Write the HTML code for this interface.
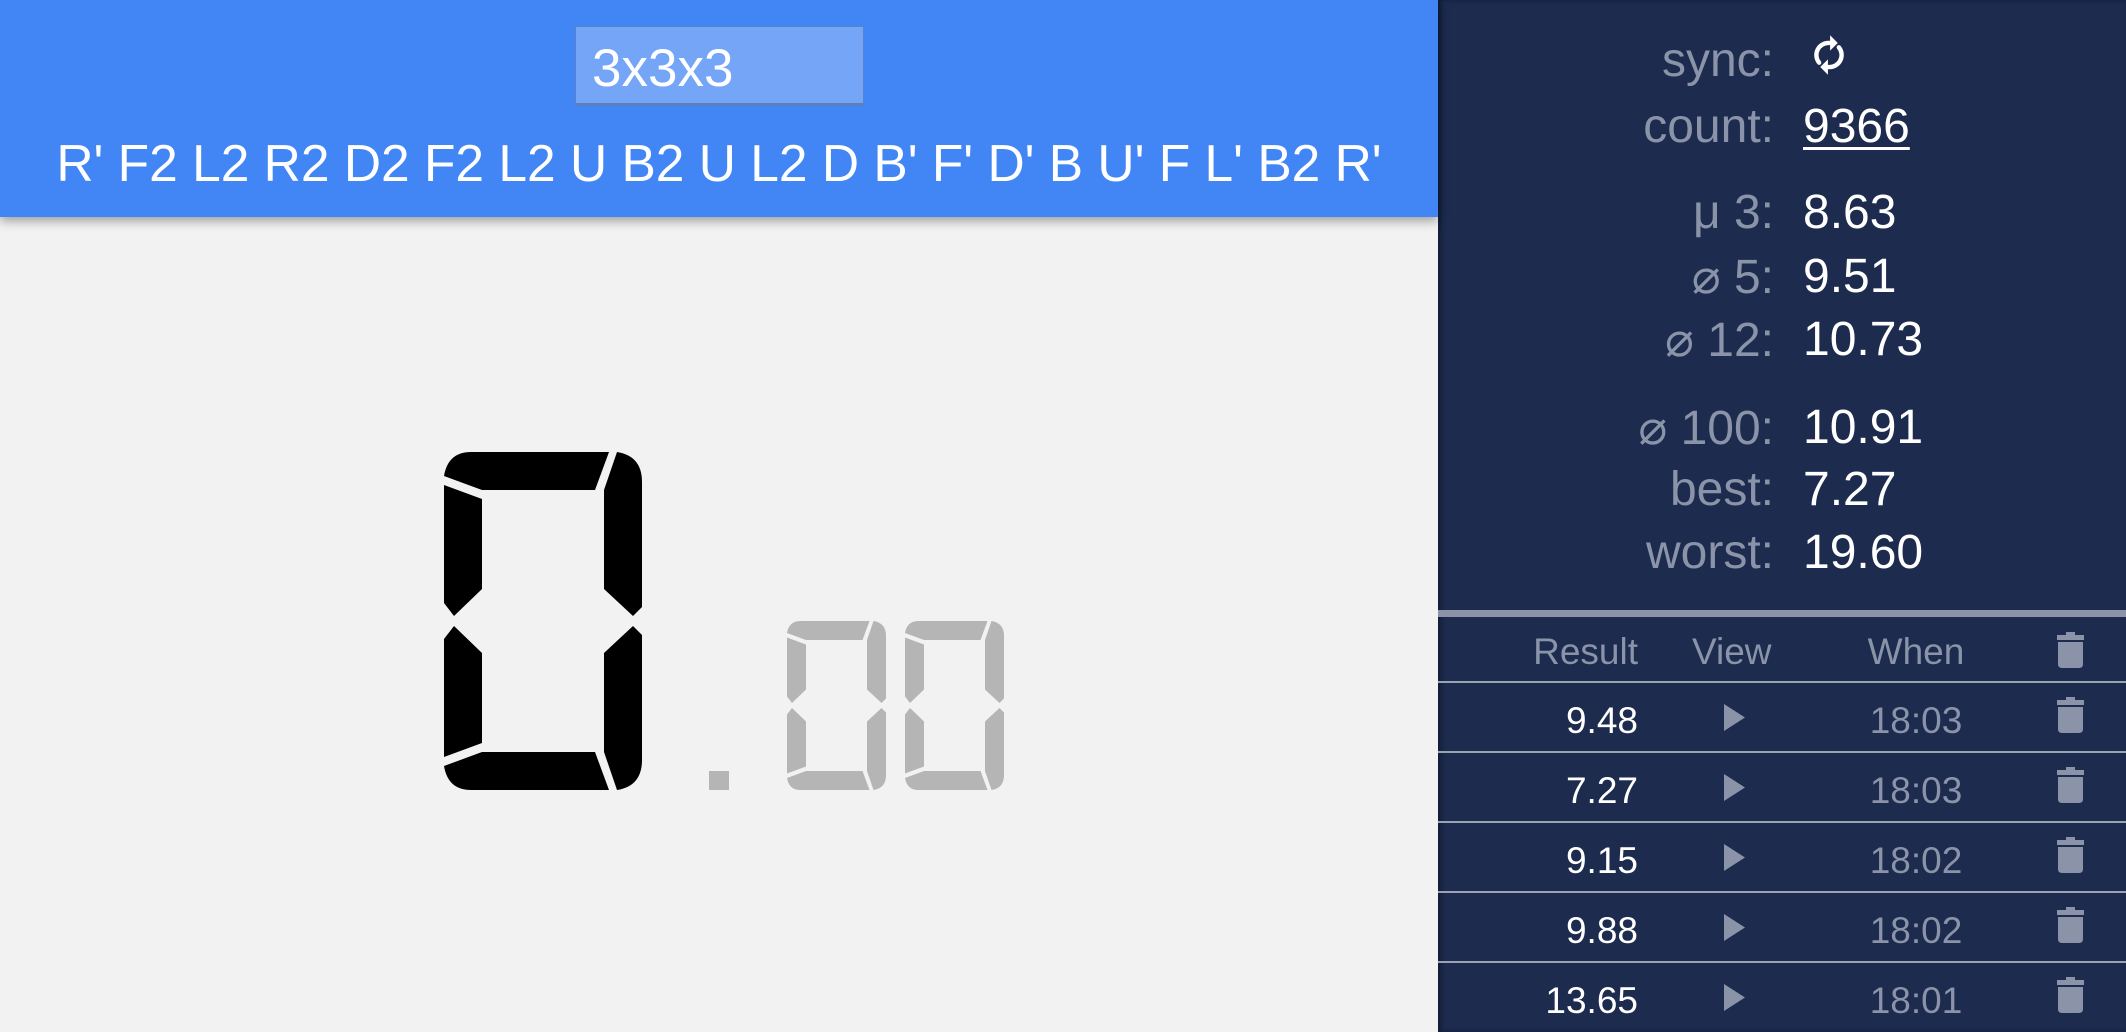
<!DOCTYPE html>
<html><head><meta charset="utf-8">
<style>
*{margin:0;padding:0;box-sizing:border-box}
html,body{width:2126px;height:1032px;overflow:hidden;background:#f2f2f2;font-family:"Liberation Sans",Arial,sans-serif}
#hdr{position:absolute;left:0;top:0;width:1438px;height:217px;background:#4285f4;box-shadow:0 4px 10px rgba(0,0,0,.35);z-index:2}
#inp{position:absolute;left:575px;top:26px;width:289px;height:80px;background:#75a5f7;border:1px solid #5b83c9;border-bottom:3px solid #5b7fbf;color:#fff;font-size:53px;line-height:84px;padding-left:16px}
#scr{position:absolute;left:0;top:128px;width:1438px;text-align:center;color:#fff;font-size:51.5px;line-height:70px;white-space:nowrap}
#panel{position:absolute;left:1438px;top:0;width:688px;height:1032px;background:#1c2b4e;box-shadow:inset 3px 0 4px rgba(0,0,0,.35)}
.lab{position:absolute;right:352px;color:#8a93a8;font-size:48px;white-space:nowrap;text-align:right}
.val{position:absolute;left:365px;color:#fff;font-size:48px;white-space:nowrap}
.sep{position:absolute;left:0;width:688px;top:610px;height:7px;background:#8a93a8}
.line{position:absolute;left:0;width:688px;height:2px;background:#9aa2b4}
.cell{position:absolute;font-size:37px;white-space:nowrap}
.r{color:#fff;text-align:right;width:200px;left:0}
.h{color:#8a93a8}
.w{color:#8a93a8;left:428px;width:100px;text-align:center}
</style></head><body>
<div id="hdr">
 <div id="inp">3x3x3</div>
 <div id="scr">R' F2 L2 R2 D2 F2 L2 U B2 U L2 D B' F' D' B U' F L' B2 R'</div>
</div>

<svg style="position:absolute;left:0;top:0" width="1438" height="1032">
 <defs>
  <g id="half">
   <path d="M27,0 L165,0 L151,38 L38,38 L0,24 Q4,0 27,0 Z"/>
   <path d="M173,0 Q198,4 198,30 L198,155 L189,164 L160,137 L160,38 Z"/>
   <path d="M0,33 L38,47 L38,137 L10,164 L0,151 Z"/>
  </g>
  <g id="zero">
   <use href="#half"/>
   <use href="#half" transform="translate(0,338) scale(1,-1)"/>
  </g>
 </defs>
 <g fill="#000" transform="translate(444,452)"><use href="#zero"/></g>
 <rect x="709" y="771" width="20" height="19" fill="#b5b5b5"/>
 <g fill="#b5b5b5" transform="translate(787,621) scale(0.5)"><use href="#zero"/></g>
 <g fill="#b5b5b5" transform="translate(905,621) scale(0.5)"><use href="#zero"/></g>
</svg>

<div id="panel">
 <div class="lab" style="top:33px">sync:</div>
 <svg style="position:absolute;left:372px;top:32px" width="38" height="46" viewBox="0 0 34 42">
  <g fill="none" stroke="#fff" stroke-width="4" stroke-linecap="round">
   <path d="M8,28 A11,11 0 0 1 17,10 L20,10"/>
   <path d="M26,14 A11,11 0 0 1 17,32 L14,32"/>
  </g>
  <path d="M18,3 L25,10 L18,17 Z" fill="#fff"/>
  <path d="M16,25 L9,32 L16,39 Z" fill="#fff"/>
 </svg>
 <div class="lab" style="top:99px">count:</div>
 <div class="val" style="top:99px;text-decoration:underline;text-underline-offset:5px;text-decoration-thickness:3px">9366</div>
 <div class="lab" style="top:185px">μ 3:</div><div class="val" style="top:185px">8.63</div>
 <div class="lab" style="top:249px">⌀ 5:</div><div class="val" style="top:249px">9.51</div>
 <div class="lab" style="top:312px">⌀ 12:</div><div class="val" style="top:312px">10.73</div>
 <div class="lab" style="top:400px">⌀ 100:</div><div class="val" style="top:400px">10.91</div>
 <div class="lab" style="top:462px">best:</div><div class="val" style="top:462px">7.27</div>
 <div class="lab" style="top:525px">worst:</div><div class="val" style="top:525px">19.60</div>

 <div class="sep"></div>
 <div class="cell h" style="top:631px;right:488px;text-align:right">Result</div>
 <div class="cell h" style="top:631px;left:254px">View</div>
 <div class="cell h" style="top:631px;left:428px;width:100px;text-align:center">When</div>
 <svg style="position:absolute;left:619px;top:632px" width="27" height="36" viewBox="0 0 27 36"><path d="M9,0 H18 V3 H27 V8 H0 V3 H9 Z M1,10 H26 V32 Q26,36 22,36 H5 Q1,36 1,32 Z" fill="#8a93a8"/></svg>
 <div class="line" style="top:681px"></div>
</div>
<div style="position:absolute;left:1438px;top:0">
 <div class="cell r" style="top:700px">9.48</div><svg style="position:absolute;left:286px;top:704px" width="21" height="27"><path d="M0,0 L21,13.5 L0,27Z" fill="#8a93a8"/></svg><div class="cell w" style="top:700px">18:03</div><svg style="position:absolute;left:619px;top:697px" width="27" height="36" viewBox="0 0 27 36"><path d="M9,0 H18 V3 H27 V8 H0 V3 H9 Z M1,10 H26 V32 Q26,36 22,36 H5 Q1,36 1,32 Z" fill="#8a93a8"/></svg>
 <div class="line" style="top:751px"></div>
 <div class="cell r" style="top:770px">7.27</div><svg style="position:absolute;left:286px;top:774px" width="21" height="27"><path d="M0,0 L21,13.5 L0,27Z" fill="#8a93a8"/></svg><div class="cell w" style="top:770px">18:03</div><svg style="position:absolute;left:619px;top:767px" width="27" height="36" viewBox="0 0 27 36"><path d="M9,0 H18 V3 H27 V8 H0 V3 H9 Z M1,10 H26 V32 Q26,36 22,36 H5 Q1,36 1,32 Z" fill="#8a93a8"/></svg>
 <div class="line" style="top:821px"></div>
 <div class="cell r" style="top:840px">9.15</div><svg style="position:absolute;left:286px;top:844px" width="21" height="27"><path d="M0,0 L21,13.5 L0,27Z" fill="#8a93a8"/></svg><div class="cell w" style="top:840px">18:02</div><svg style="position:absolute;left:619px;top:837px" width="27" height="36" viewBox="0 0 27 36"><path d="M9,0 H18 V3 H27 V8 H0 V3 H9 Z M1,10 H26 V32 Q26,36 22,36 H5 Q1,36 1,32 Z" fill="#8a93a8"/></svg>
 <div class="line" style="top:891px"></div>
 <div class="cell r" style="top:910px">9.88</div><svg style="position:absolute;left:286px;top:914px" width="21" height="27"><path d="M0,0 L21,13.5 L0,27Z" fill="#8a93a8"/></svg><div class="cell w" style="top:910px">18:02</div><svg style="position:absolute;left:619px;top:907px" width="27" height="36" viewBox="0 0 27 36"><path d="M9,0 H18 V3 H27 V8 H0 V3 H9 Z M1,10 H26 V32 Q26,36 22,36 H5 Q1,36 1,32 Z" fill="#8a93a8"/></svg>
 <div class="line" style="top:961px"></div>
 <div class="cell r" style="top:980px">13.65</div><svg style="position:absolute;left:286px;top:984px" width="21" height="27"><path d="M0,0 L21,13.5 L0,27Z" fill="#8a93a8"/></svg><div class="cell w" style="top:980px">18:01</div><svg style="position:absolute;left:619px;top:977px" width="27" height="36" viewBox="0 0 27 36"><path d="M9,0 H18 V3 H27 V8 H0 V3 H9 Z M1,10 H26 V32 Q26,36 22,36 H5 Q1,36 1,32 Z" fill="#8a93a8"/></svg>
</div>
</body></html>
